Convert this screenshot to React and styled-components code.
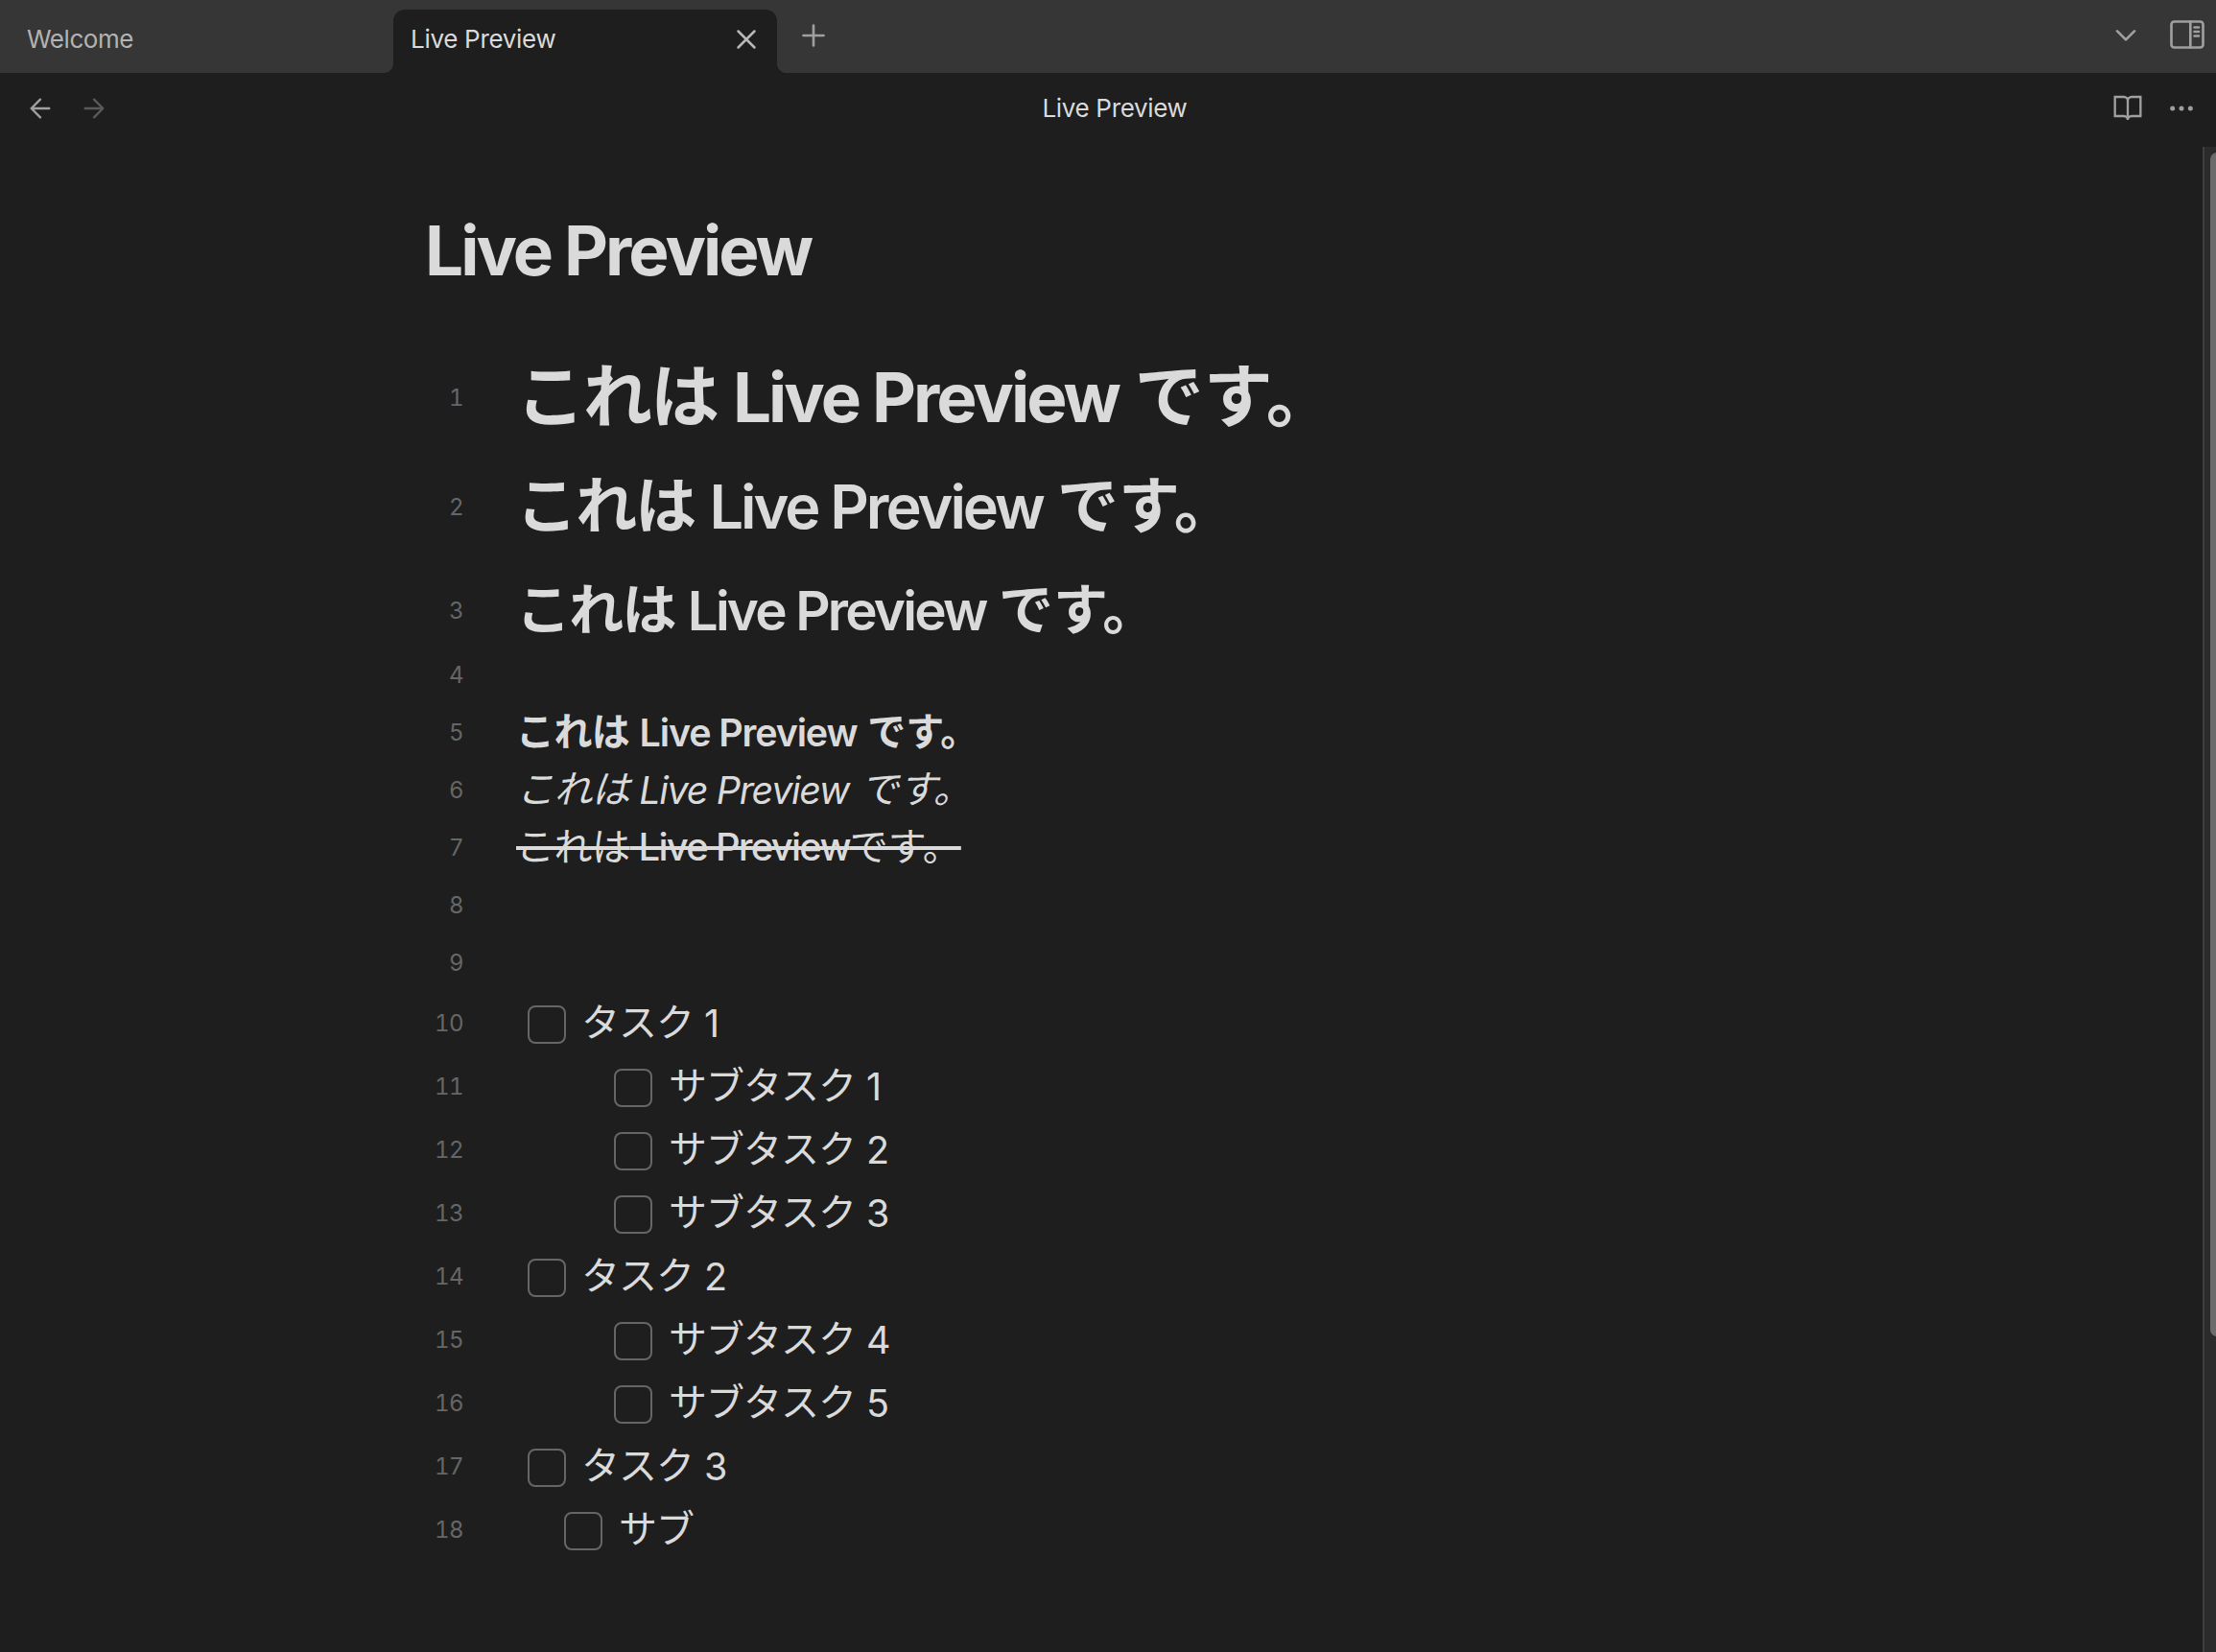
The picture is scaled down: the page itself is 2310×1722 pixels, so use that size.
import React from "react";
import styled, { createGlobalStyle } from "styled-components";

const Global = createGlobalStyle`
  * { box-sizing: border-box; }
  html, body { margin: 0; background: #1e1e1e; }
  body { font-family: Inter, "Noto Sans CJK JP", sans-serif; color: #dadada; }
`;

const Window = styled.div`
  width: 2310px;
  height: 1722px;
  overflow: hidden;
  display: flex;
  flex-direction: column;
  background: #1e1e1e;
`;

const TabBar = styled.div`
  height: 76px;
  flex: none;
  display: flex;
  align-items: flex-end;
  background: #363636;
`;

const Tab = styled.div`
  position: relative;
  width: ${(p) => (p.$active ? 400 : 410)}px;
  height: 66px;
  padding: 0 15px 4px ${(p) => (p.$active ? 18 : 28)}px;
  display: flex;
  align-items: center;
  justify-content: space-between;
  font-size: 26px;
  line-height: 32px;
  letter-spacing: ${(p) => (p.$active ? -0.3 : -0.45)}px;
  color: ${(p) => (p.$active ? "#dadada" : "#b3b3b3")};
  background: ${(p) => (p.$active ? "#1e1e1e" : "transparent")};
  border-radius: 12px 12px 0 0;
`;

const TabFlare = styled.span`
  position: absolute;
  bottom: 0;
  ${(p) => p.$side}: -10px;
  width: 10px;
  height: 10px;
  background: radial-gradient(
    circle at ${(p) => (p.$side === "left" ? "0 0" : "100% 0")},
    transparent 9.5px,
    #1e1e1e 10.5px
  );
`;

const Icon = styled.svg`
  display: block;
  flex: none;
  width: ${(p) => p.$size || 36}px;
  height: ${(p) => p.$size || 36}px;
  fill: none;
  stroke: ${(p) => p.$color || "#a0a0a0"};
  stroke-width: 1.75;
  stroke-linecap: round;
  stroke-linejoin: ${(p) => p.$join || "round"};
`;

const NewTab = styled.div`
  margin: 0 auto 21px 20px;
`;

const TabActions = styled.div`
  display: flex;
  gap: 28px;
  padding: 0 12px 22px 0;
`;

const ViewHeader = styled.div`
  height: 77px;
  flex: none;
  display: grid;
  grid-template-columns: 1fr auto 1fr;
  align-items: center;
  padding: 0 20px 3px 26px;
`;

const HeaderGroup = styled.div`
  display: flex;
  gap: 24px;
  justify-content: ${(p) => (p.$end ? "flex-end" : "flex-start")};
`;

const HeaderTitle = styled.div`
  font-size: 26px;
  letter-spacing: -0.33px;
  padding: 0 0 1px 8px;
`;

const Body = styled.div`
  flex: 1;
  display: flex;
  min-height: 0;
`;

const Note = styled.main`
  flex: 1;
  padding: 65px 0 0 443px;
`;

const NoteTitle = styled.h1`
  margin: 0 0 51px;
  font-size: 71px;
  line-height: 86px;
  font-weight: 700;
  letter-spacing: -2.95px;
`;

const Line = styled.div`
  display: flex;
  align-items: center;
  height: ${(p) => p.$height}px;
  padding-top: ${(p) => p.$top || 0}px;
`;

const LineNumber = styled.span`
  width: 40px;
  margin-right: 55px;
  padding-top: 2px;
  flex: none;
  text-align: right;
  font-size: 24px;
  line-height: 30px;
  letter-spacing: -0.6px;
  font-variant-numeric: tabular-nums;
  color: #666666;
`;

const LineText = styled.span`
  white-space: pre;
  font-size: ${(p) => p.$size || 40}px;
  line-height: 60px;
  font-weight: ${(p) => p.$weight || 400};
  font-style: ${(p) => (p.$italic ? "italic" : "normal")};
  text-decoration: ${(p) => (p.$struck ? "line-through 4px" : "none")};
`;

const Kana = styled.span`
  letter-spacing: ${(p) => p.$spacing || 0}px;
`;

const Latin = styled.span`
  font-size: ${(p) => p.$size || 39.5}px;
  line-height: 1;
  font-weight: ${(p) => p.$weight || 450};
  letter-spacing: ${(p) => p.$spacing}px;
  vertical-align: ${(p) => p.$drop ?? -1}px;
  padding: 0 ${(p) => p.$after || 0}px 0 ${(p) => p.$before || 0}px;
`;

const Checkbox = styled.span`
  width: 40px;
  height: 40px;
  flex: none;
  margin: 4px ${(p) => (p.$indent === 12 ? 16 : 17)}px 0 ${(p) => p.$indent}px;
  border: 2px solid #666666;
  border-radius: 8px;
`;

const ScrollTrack = styled.div`
  width: 14px;
  padding: 6px 0 0 6px;
  overflow: hidden;
  background: #2b2b2b;
  border-left: 2px solid #3f3f3f;
`;

const ScrollThumb = styled.div`
  width: 14px;
  height: 1234px;
  border-radius: 7px;
  background: #6b6b6b;
`;

const lines = [
  { n: 1, height: 118, size: 72, weight: 700, kana: -2, latin: { $size: 71, $weight: 700, $spacing: -2.95, $before: 2, $after: 3 } },
  { n: 2, height: 110, size: 64, weight: 700, kana: -1.85, latin: { $size: 63, $weight: 620, $spacing: -3.05, $before: 2.2, $after: 2.4 } },
  { n: 3, height: 90, top: 16, size: 57, weight: 700, kana: -1.8, latin: { $size: 56.5, $weight: 610, $spacing: -2.8, $before: 1.7, $after: 2 } },
  { n: 4, height: 60 },
  { n: 5, height: 60, weight: 700, kana: -0.6, latin: { $weight: 600, $spacing: -1.15, $before: 1.5, $after: 2 } },
  { n: 6, height: 60, italic: true, kana: -0.6, latin: { $spacing: -1.35, $before: 0.4, $after: 2 } },
  { n: 7, height: 60, struck: true, tight: true, kana: -0.45, latin: { $size: 40, $spacing: -1.75, $drop: 0 } },
  { n: 8, height: 60 },
  { n: 9, height: 60 },
];

const tasks = [
  { n: 10, indent: 12, text: "タスク", index: 1 },
  { n: 11, indent: 102, text: "サブタスク", index: 1 },
  { n: 12, indent: 102, text: "サブタスク", index: 2 },
  { n: 13, indent: 102, text: "サブタスク", index: 3 },
  { n: 14, indent: 12, text: "タスク", index: 2 },
  { n: 15, indent: 102, text: "サブタスク", index: 4 },
  { n: 16, indent: 102, text: "サブタスク", index: 5 },
  { n: 17, indent: 12, text: "タスク", index: 3 },
  { n: 18, indent: 50, text: "サブ" },
];

function Sentence({ line }) {
  return (
    <LineText $size={line.size} $weight={line.weight} $italic={line.italic} $struck={line.struck}>
      <Kana $spacing={line.kana}>これは</Kana>
      <Latin {...line.latin}>{line.tight ? " Live Preview" : " Live Preview "}</Latin>
      <Kana>です。</Kana>
    </LineText>
  );
}

export default function App() {
  return (
    <Window>
      <Global />
      <TabBar>
        <Tab>Welcome</Tab>
        <Tab $active>
          <TabFlare $side="left" />
          Live Preview
          <Icon viewBox="0 0 24 24" $size={34} $color="#b8b8b8">
            <path d="M18 6 6 18M6 6l12 12" />
          </Icon>
          <TabFlare $side="right" />
        </Tab>
        <NewTab>
          <Icon viewBox="0 0 24 24">
            <path d="M5 12h14M12 5v14" />
          </Icon>
        </NewTab>
        <TabActions>
          <Icon viewBox="0 0 24 24">
            <path d="m6 9.6 6 6 6-6" />
          </Icon>
          <Icon viewBox="0 0 24 24">
            <rect x="1" y="3" width="22" height="18" rx="2" />
            <path d="M14.2 3v18M17 7h3M17 10h3M17 13h3" />
          </Icon>
        </TabActions>
      </TabBar>
      <ViewHeader>
        <HeaderGroup>
          <Icon viewBox="0 0 24 24" $size={32}>
            <path d="m12 19-7-7 7-7M19 12H5" />
          </Icon>
          <Icon viewBox="0 0 24 24" $size={32} $color="#5a5a5a">
            <path d="M5 12h14M12 5l7 7-7 7" />
          </Icon>
        </HeaderGroup>
        <HeaderTitle>Live Preview</HeaderTitle>
        <HeaderGroup $end>
          <Icon viewBox="0 0 24 24" $size={32} $join="miter">
            <path d="M2 3h7a3 3 0 0 1 3 3v15a3 3 0 0 0-3-3H2zM22 3h-7a3 3 0 0 0-3 3v15a3 3 0 0 1 3-3h7z" />
          </Icon>
          <Icon viewBox="0 0 24 24" $size={32}>
            <circle cx="5" cy="12" r="1" />
            <circle cx="12" cy="12" r="1" />
            <circle cx="19" cy="12" r="1" />
          </Icon>
        </HeaderGroup>
      </ViewHeader>
      <Body>
        <Note>
          <NoteTitle>Live Preview</NoteTitle>
          {lines.map((line) => (
            <Line key={line.n} $height={line.height} $top={line.top}>
              <LineNumber>{line.n}</LineNumber>
              {line.latin && <Sentence line={line} />}
            </Line>
          ))}
          {tasks.map((t) => (
            <Line key={t.n} $height={66}>
              <LineNumber>{t.n}</LineNumber>
              <Checkbox $indent={t.indent} />
              <LineText>
                <Kana $spacing={-1}>{t.text}</Kana>
                {t.index && (
                  <Latin $spacing={-1} $before={1} $weight={400}>
                    {` ${t.index}`}
                  </Latin>
                )}
              </LineText>
            </Line>
          ))}
        </Note>
        <ScrollTrack>
          <ScrollThumb />
        </ScrollTrack>
      </Body>
    </Window>
  );
}
